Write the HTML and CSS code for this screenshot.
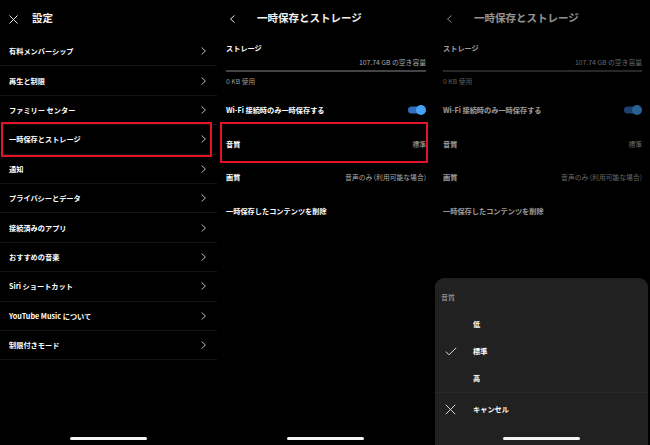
FILE: index.html
```html
<!DOCTYPE html>
<html lang="ja">
<head>
    <meta charset="UTF-8">
    <meta name="viewport" content="width=device-width, initial-scale=1.0">
    <title>設定 - 一時保存とストレージ</title>
    <link rel="stylesheet" href="styles.css">
</head>
<body>

<div class="screens">

    <!-- 1: 設定 -->
    <section class="screen">
        <header class="bar">
            <svg class="bar-icon" width="10" height="10" viewBox="0 0 10 10">
                <path d="M0.5 1.5 L8.5 9.5 M8.5 1.5 L0.5 9.5" stroke="#e6e6e6" stroke-width="1" fill="none"/>
            </svg>
            <h1>設定</h1>
        </header>

        <ul class="menu">
            <li class="menu-row"><span>有料メンバーシップ</span><svg class="chev" width="5" height="8" viewBox="0 0 5 8"><polyline points="0.6,0.5 4.4,4 0.6,7.5"/></svg></li>
            <li class="menu-row"><span>再生と制限</span><svg class="chev" width="5" height="8" viewBox="0 0 5 8"><polyline points="0.6,0.5 4.4,4 0.6,7.5"/></svg></li>
            <li class="menu-row"><span>ファミリー センター</span><svg class="chev" width="5" height="8" viewBox="0 0 5 8"><polyline points="0.6,0.5 4.4,4 0.6,7.5"/></svg></li>
            <li class="menu-row marked"><span>一時保存とストレージ</span><svg class="chev" width="5" height="8" viewBox="0 0 5 8"><polyline points="0.6,0.5 4.4,4 0.6,7.5"/></svg><i class="mark mark-menu"></i></li>
            <li class="menu-row"><span>通知</span><svg class="chev" width="5" height="8" viewBox="0 0 5 8"><polyline points="0.6,0.5 4.4,4 0.6,7.5"/></svg></li>
            <li class="menu-row"><span>プライバシーとデータ</span><svg class="chev" width="5" height="8" viewBox="0 0 5 8"><polyline points="0.6,0.5 4.4,4 0.6,7.5"/></svg></li>
            <li class="menu-row"><span>接続済みのアプリ</span><svg class="chev" width="5" height="8" viewBox="0 0 5 8"><polyline points="0.6,0.5 4.4,4 0.6,7.5"/></svg></li>
            <li class="menu-row"><span>おすすめの音楽</span><svg class="chev" width="5" height="8" viewBox="0 0 5 8"><polyline points="0.6,0.5 4.4,4 0.6,7.5"/></svg></li>
            <li class="menu-row"><span>Siri ショートカット</span><svg class="chev" width="5" height="8" viewBox="0 0 5 8"><polyline points="0.6,0.5 4.4,4 0.6,7.5"/></svg></li>
            <li class="menu-row"><span>YouTube Music について</span><svg class="chev" width="5" height="8" viewBox="0 0 5 8"><polyline points="0.6,0.5 4.4,4 0.6,7.5"/></svg></li>
            <li class="menu-row"><span>制限付きモード</span><svg class="chev" width="5" height="8" viewBox="0 0 5 8"><polyline points="0.6,0.5 4.4,4 0.6,7.5"/></svg></li>
        </ul>

        <div class="home"></div>
    </section>

    <!-- 2: 一時保存とストレージ -->
    <section class="screen">
        <header class="bar bar-back">
            <svg class="bar-icon" width="10" height="10" viewBox="0 0 10 10">
                <polyline points="8.5,1.5 4.5,5 8.5,8.5" stroke="#e6e6e6" stroke-width="1" fill="none"/>
            </svg>
            <h1>一時保存とストレージ</h1>
        </header>

        <div class="storage">
            <div class="storage-title">ストレージ</div>
            <div class="storage-free">107.74 GB の空き容量</div>
            <div class="storage-bar"></div>
            <div class="storage-used">0 KB 使用</div>
        </div>

        <div class="set-row">
            <span class="set-label">Wi-Fi 接続時のみ一時保存する</span>
            <svg class="toggle" width="22" height="12" viewBox="0 0 22 12">
                <rect x="3" y="2.5" width="16" height="7" rx="3.5" fill="#2f6fbe"/>
                <circle cx="16" cy="6" r="5" fill="#45a3f7"/>
            </svg>
        </div>
        <div class="set-row">
            <span class="set-label">音質</span>
            <span class="set-value">標準</span>
            <i class="mark mark-set"></i>
        </div>
        <div class="set-row">
            <span class="set-label">画質</span>
            <span class="set-value">音声のみ (利用可能な場合)</span>
        </div>
        <div class="set-row">
            <span class="set-label">一時保存したコンテンツを削除</span>
        </div>

        <div class="home"></div>
    </section>

    <!-- 3: 音質の選択 -->
    <section class="screen">
        <header class="bar bar-back">
            <svg class="bar-icon" width="10" height="10" viewBox="0 0 10 10">
                <polyline points="8.5,1.5 4.5,5 8.5,8.5" stroke="#e6e6e6" stroke-width="1" fill="none"/>
            </svg>
            <h1>一時保存とストレージ</h1>
        </header>

        <div class="storage">
            <div class="storage-title">ストレージ</div>
            <div class="storage-free">107.74 GB の空き容量</div>
            <div class="storage-bar"></div>
            <div class="storage-used">0 KB 使用</div>
        </div>

        <div class="set-row">
            <span class="set-label">Wi-Fi 接続時のみ一時保存する</span>
            <svg class="toggle" width="22" height="12" viewBox="0 0 22 12">
                <rect x="3" y="2.5" width="16" height="7" rx="3.5" fill="#2f6fbe"/>
                <circle cx="16" cy="6" r="5" fill="#45a3f7"/>
            </svg>
        </div>
        <div class="set-row">
            <span class="set-label">音質</span>
            <span class="set-value">標準</span>
        </div>
        <div class="set-row">
            <span class="set-label">画質</span>
            <span class="set-value">音声のみ (利用可能な場合)</span>
        </div>
        <div class="set-row">
            <span class="set-label">一時保存したコンテンツを削除</span>
        </div>

        <div class="dim"></div>

        <div class="sheet">
            <div class="sheet-title">音質</div>
            <ul class="options">
                <li class="option"><span class="opt-icon"></span><span>低</span></li>
                <li class="option">
                    <span class="opt-icon">
                        <svg width="12" height="9" viewBox="0 0 12 9"><polyline points="0.8,4.6 4,7.8 11.2,0.8" stroke="#d8d8d8" stroke-width="1" fill="none"/></svg>
                    </span>
                    <span>標準</span>
                </li>
                <li class="option"><span class="opt-icon"></span><span>高</span></li>
            </ul>
            <div class="option cancel">
                <span class="opt-icon">
                    <svg width="11" height="11" viewBox="0 0 11 11"><path d="M0.8 0.8 L10.2 10.2 M10.2 0.8 L0.8 10.2" stroke="#d8d8d8" stroke-width="1" fill="none"/></svg>
                </span>
                <span>キャンセル</span>
            </div>
            <div class="home"></div>
        </div>
    </section>

</div>

</body>
</html>
```

FILE: styles.css
```css
* {
    box-sizing: border-box;
}

body {
    margin: 0;
    background-color: #000;
    color: #fff;
    font-family: "Noto Sans CJK JP", "Noto Sans", sans-serif;
}

.screens {
    display: grid;
    grid-template-columns: 217px 217px 216px;
    width: 650px;
    height: 445px;
}

.screen {
    position: relative;
    display: flex;
    flex-direction: column;
    height: 445px;
    background-color: #000;
    overflow: hidden;
}

/* Barra superior */
.bar {
    display: flex;
    align-items: center;
    height: 37px;
    padding-left: 9px;
}

.bar-icon {
    flex: none;
}

.bar h1 {
    margin: 0 0 0 13px;
    font-size: 10.5px;
    font-weight: 700;
    line-height: 1;
    color: #f2f2f2;
}

.bar-back h1 {
    margin-left: 21px;
}

/* Lista de configurações */
.menu {
    list-style: none;
    margin: 0;
    padding: 0;
}

.menu-row {
    position: relative;
    display: flex;
    align-items: center;
    justify-content: space-between;
    height: 29.4px;
    padding: 0 11px 0 9px;
    border-bottom: 1px solid #151515;
    font-size: 7.2px;
    font-weight: 700;
}

.chev polyline {
    fill: none;
    stroke: #cfcfcf;
    stroke-width: 0.9;
}

/* Caixa vermelha de destaque */
.mark {
    position: absolute;
    border: 2px solid #e4132a;
}

.mark-menu {
    top: -3px;
    bottom: -3px;
    left: 1px;
    right: 5px;
}

.mark-set {
    top: -5px;
    bottom: -2px;
    left: 3px;
    right: 6px;
}

/* Armazenamento */
.storage {
    padding: 4px 8px 0 9px;
}

.storage-title {
    height: 14px;
    line-height: 14px;
    font-size: 7.2px;
    font-weight: 700;
}

.storage-free {
    margin-top: 2px;
    height: 10px;
    line-height: 10px;
    text-align: right;
    font-size: 6.8px;
    color: #ababab;
}

.storage-bar {
    margin-top: 3px;
    height: 1.5px;
    background-color: #444;
}

.storage-used {
    margin-top: 4px;
    height: 10px;
    line-height: 10px;
    font-size: 6.8px;
    color: #9a9a9a;
}

.set-row {
    position: relative;
    display: flex;
    align-items: center;
    justify-content: space-between;
    height: 33.5px;
    padding: 0 8px 0 9px;
}

.storage + .set-row {
    margin-top: 8px;
}

.set-label {
    font-size: 7.2px;
    font-weight: 700;
}

.set-value {
    font-size: 6.8px;
    color: #ababab;
}

.toggle {
    margin-right: -1px;
}

/* Indicador inicial */
.home {
    margin: auto auto 5px;
    width: 77px;
    height: 3px;
    border-radius: 2px;
    background-color: #f4f4f4;
}

/* Folha inferior */
.dim {
    position: absolute;
    inset: 0;
    background-color: rgba(0, 0, 0, 0.4);
}

.sheet {
    position: absolute;
    top: 278px;
    left: 1px;
    right: 2px;
    bottom: 0;
    display: flex;
    flex-direction: column;
    padding-top: 12px;
    border-radius: 9px 9px 0 0;
    background-color: #212121;
}

.sheet-title {
    height: 14px;
    line-height: 14px;
    padding-left: 6px;
    font-size: 7px;
    color: #a8a8a8;
}

.options {
    list-style: none;
    margin: 6.5px 0 0;
    padding: 0;
    border-bottom: 1px solid #282828;
}

.option {
    display: flex;
    align-items: center;
    height: 27px;
    padding-left: 10px;
    font-size: 7.2px;
    font-weight: 700;
}

.opt-icon {
    display: flex;
    align-items: center;
    width: 28px;
}

.cancel {
    height: 33px;
}
```
